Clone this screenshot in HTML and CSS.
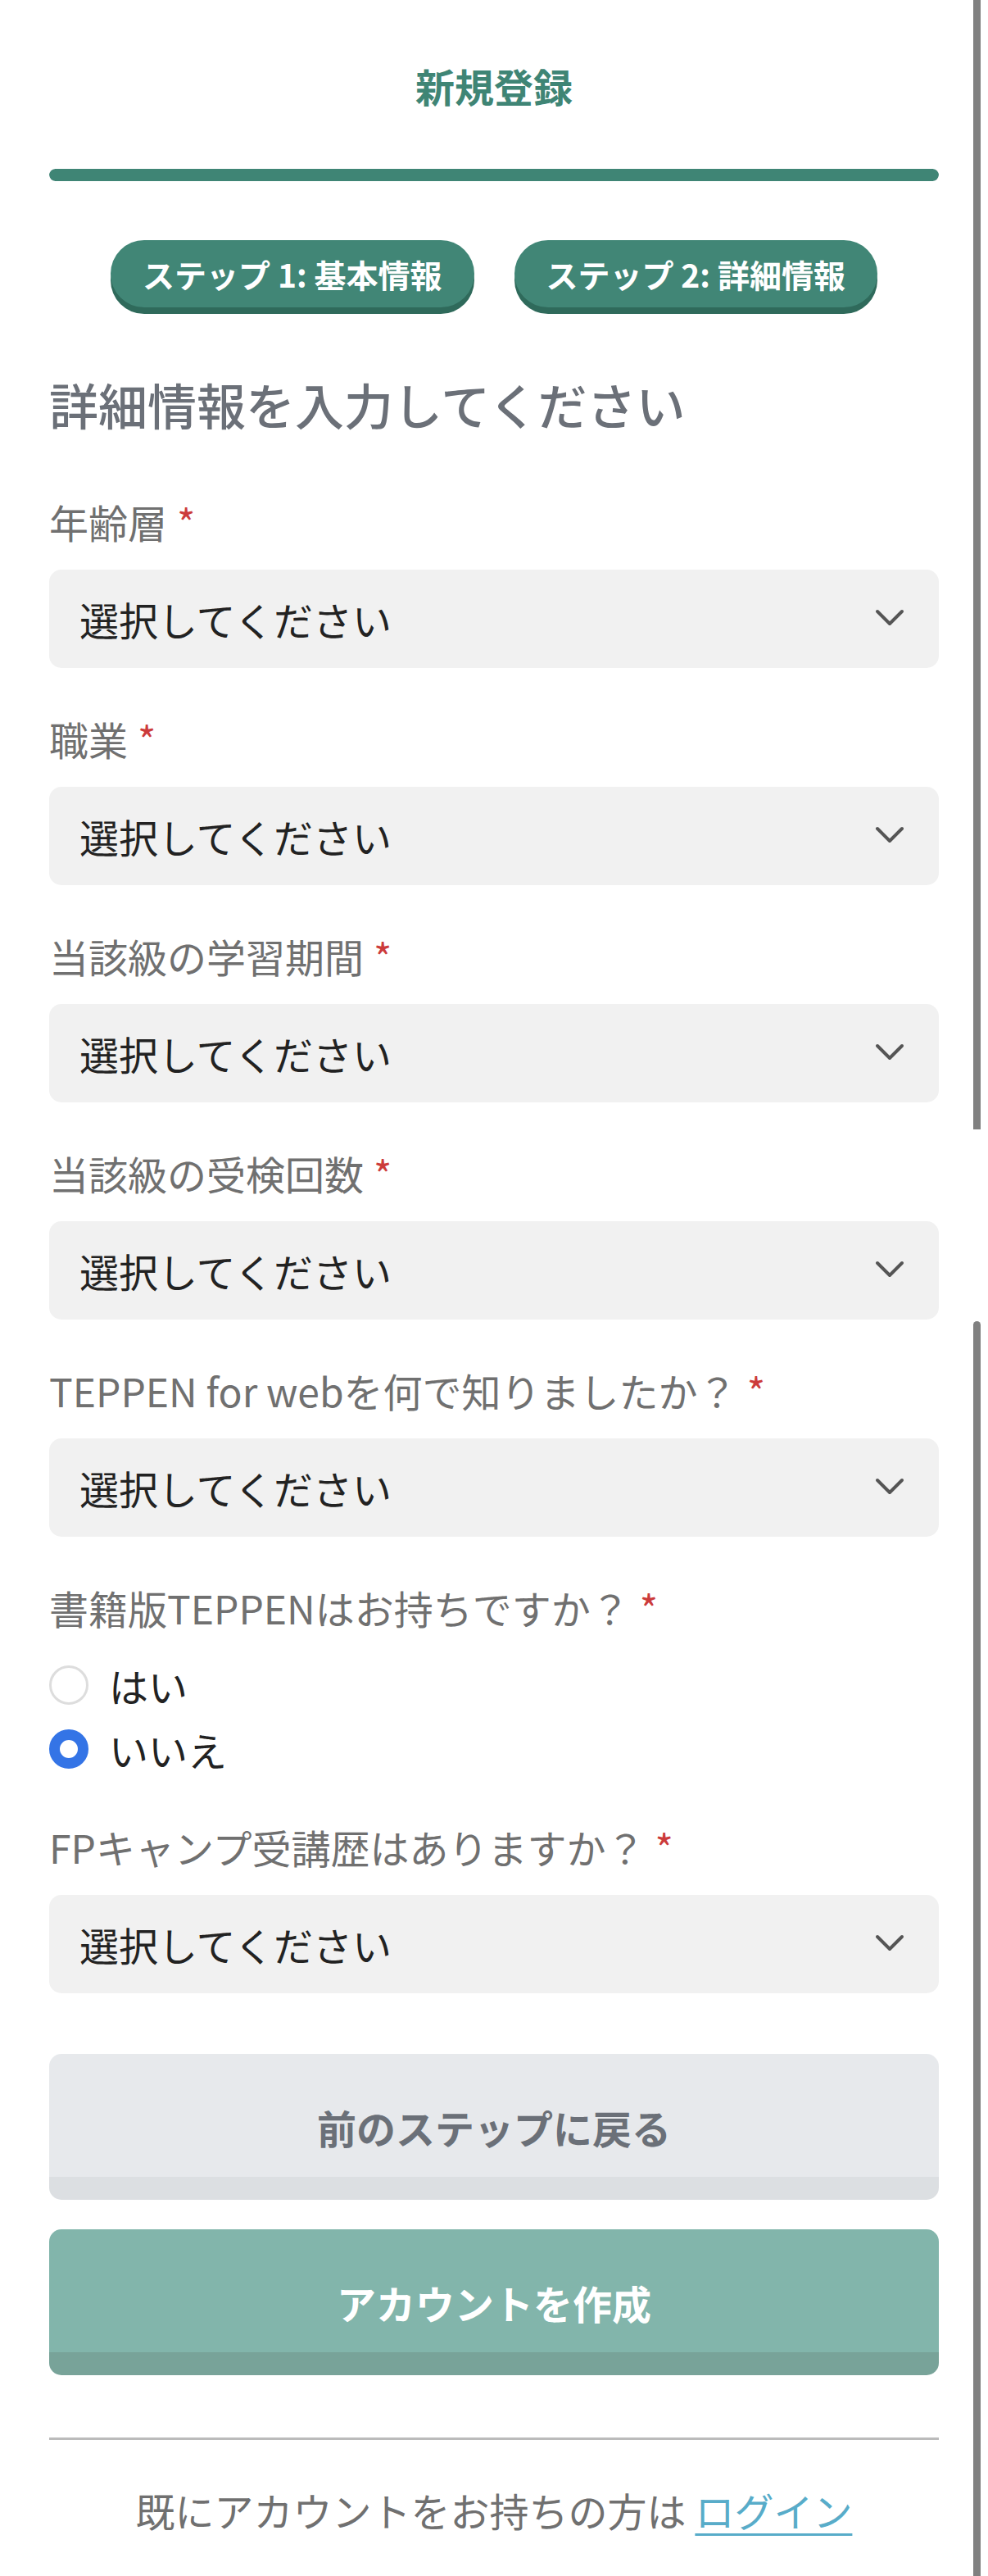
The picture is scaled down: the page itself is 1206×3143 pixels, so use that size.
FILE: index.html
```html
<!DOCTYPE html>
<html lang="ja">
<head>
    <meta charset="UTF-8" />
    <meta name="viewport" content="width=device-width, initial-scale=1.0" />
    <title>新規登録</title>
    <link rel="stylesheet" href="styles.css">
</head>
<body>
    <div class="page">
        <h1 class="title">新規登録</h1>

        <div class="progress">
            <div class="progress-fill" style="width: 100%"></div>
        </div>

        <div class="steps">
            <span class="step">ステップ 1: 基本情報</span>
            <span class="step">ステップ 2: 詳細情報</span>
        </div>

        <form class="form">
            <h2 class="form-heading">詳細情報を入力してください</h2>

            <div class="field">
                <label class="field-label">年齢層<span class="req">*</span></label>
                <div class="select-wrap">
                    <select><option>選択してください</option></select>
                    <svg class="chevron" viewBox="0 0 36 22"><polyline points="3,3 18,18 33,3" /></svg>
                </div>
            </div>

            <div class="field">
                <label class="field-label">職業<span class="req">*</span></label>
                <div class="select-wrap">
                    <select><option>選択してください</option></select>
                    <svg class="chevron" viewBox="0 0 36 22"><polyline points="3,3 18,18 33,3" /></svg>
                </div>
            </div>

            <div class="field">
                <label class="field-label">当該級の学習期間<span class="req">*</span></label>
                <div class="select-wrap">
                    <select><option>選択してください</option></select>
                    <svg class="chevron" viewBox="0 0 36 22"><polyline points="3,3 18,18 33,3" /></svg>
                </div>
            </div>

            <div class="field">
                <label class="field-label">当該級の受検回数<span class="req">*</span></label>
                <div class="select-wrap">
                    <select><option>選択してください</option></select>
                    <svg class="chevron" viewBox="0 0 36 22"><polyline points="3,3 18,18 33,3" /></svg>
                </div>
            </div>

            <div class="field">
                <label class="field-label">TEPPEN for webを何で知りましたか？<span class="req">*</span></label>
                <div class="select-wrap">
                    <select><option>選択してください</option></select>
                    <svg class="chevron" viewBox="0 0 36 22"><polyline points="3,3 18,18 33,3" /></svg>
                </div>
            </div>

            <div class="field">
                <label class="field-label">書籍版TEPPENはお持ちですか？<span class="req">*</span></label>
                <div class="radio-group">
                    <label class="radio"><input type="radio" name="book"> はい</label>
                    <label class="radio"><input type="radio" name="book" checked> いいえ</label>
                </div>
            </div>

            <div class="field">
                <label class="field-label">FPキャンプ受講歴はありますか？<span class="req">*</span></label>
                <div class="select-wrap">
                    <select><option>選択してください</option></select>
                    <svg class="chevron" viewBox="0 0 36 22"><polyline points="3,3 18,18 33,3" /></svg>
                </div>
            </div>

            <div class="actions">
                <button type="button" class="btn btn-back">前のステップに戻る</button>
                <button type="button" class="btn btn-submit">アカウントを作成</button>
            </div>
        </form>

        <hr class="divider">

        <p class="footer">既にアカウントをお持ちの方は <a href="#">ログイン</a></p>
    </div>

    <div class="scroll-thumb scroll-thumb-top"></div>
    <div class="scroll-thumb scroll-thumb-bottom"></div>
</body>
</html>
```

FILE: styles.css
```css
* {
    margin: 0;
    padding: 0;
    box-sizing: border-box;
}

body {
    font-family: "Noto Sans CJK JP", "Noto Sans", sans-serif;
    background: #ffffff;
    color: #222222;
    font-size: 48px;
    position: relative;
    min-height: 3143px;
}

.page {
    padding: 68px 60px 0;
}

.title {
    font-size: 48px;
    font-weight: 700;
    line-height: 72px;
    text-align: center;
    color: #3f8575;
}

.progress {
    margin-top: 66px;
    height: 15px;
    border-radius: 8px;
    background: #e5e7eb;
    overflow: hidden;
}

.progress-fill {
    height: 100%;
    background: #3f8575;
    border-radius: 8px;
}

.steps {
    margin-top: 72px;
    display: flex;
    justify-content: center;
    gap: 49px;
}

.step {
    height: 82px;
    padding: 0 39px;
    display: flex;
    align-items: center;
    background: #418676;
    color: #ffffff;
    font-size: 39px;
    font-weight: 700;
    border-radius: 41px;
    box-shadow: 0 8px 0 #2f6a5b;
}

.form {
    margin-top: 73px;
    display: flex;
    flex-direction: column;
    gap: 50px;
}

.form-heading {
    font-size: 60px;
    font-weight: 500;
    line-height: 90px;
    color: #6b7078;
    margin-bottom: 12px;
}

.field-label {
    display: block;
    line-height: 72px;
    margin-bottom: 23px;
    color: #707070;
}

.req {
    color: #cc3b3b;
    margin-left: 12px;
}

.select-wrap {
    position: relative;
}

.select-wrap select {
    appearance: none;
    -webkit-appearance: none;
    width: 100%;
    height: 120px;
    padding: 0 110px 0 37px;
    border: none;
    border-radius: 15px;
    background: #f1f1f1;
    color: #222222;
    font-family: inherit;
    font-size: 48px;
    outline: none;
}

.chevron {
    position: absolute;
    right: 42px;
    top: 48px;
    width: 36px;
    height: 22px;
    pointer-events: none;
}

.chevron polyline {
    fill: none;
    stroke: #555555;
    stroke-width: 4;
    stroke-linecap: round;
    stroke-linejoin: round;
}

.radio-group {
    margin: -3px 0 -6px;
    display: flex;
    flex-direction: column;
}

.radio {
    height: 78px;
    display: flex;
    align-items: center;
    gap: 25px;
    color: #222222;
}

.radio input {
    appearance: none;
    -webkit-appearance: none;
    width: 48px;
    height: 48px;
    border: 3px solid #dddddd;
    border-radius: 50%;
    background: #ffffff;
    flex-shrink: 0;
}

.radio input:checked {
    border: 13px solid #3474e6;
}

.actions {
    margin-top: 24px;
    display: flex;
    flex-direction: column;
    gap: 36px;
}

.btn {
    width: 100%;
    height: 178px;
    border: none;
    border-radius: 15px;
    font-family: inherit;
    font-size: 48px;
    font-weight: 700;
    cursor: pointer;
}

.btn-back {
    background: linear-gradient(to bottom, #e7e9ec 0, #e7e9ec 150px, #dcdfe2 150px);
    color: #6b7078;
}

.btn-submit {
    background: linear-gradient(to bottom, #82b5ab 0, #82b5ab 150px, #78a399 150px);
    color: #ffffff;
}

.divider {
    margin-top: 76px;
    border: none;
    border-top: 3px solid #bbbbbb;
}

.footer {
    margin-top: 49px;
    line-height: 72px;
    text-align: center;
    color: #707070;
}

.footer a {
    color: #58acc9;
    text-decoration: underline;
    text-decoration-thickness: 3px;
    text-underline-offset: 8px;
}

.scroll-thumb {
    position: absolute;
    right: 9px;
    width: 9px;
    background: #808080;
}

.scroll-thumb-top {
    top: 0;
    height: 1378px;
}

.scroll-thumb-bottom {
    top: 1612px;
    bottom: 0;
    border-radius: 5px 5px 0 0;
}
```
